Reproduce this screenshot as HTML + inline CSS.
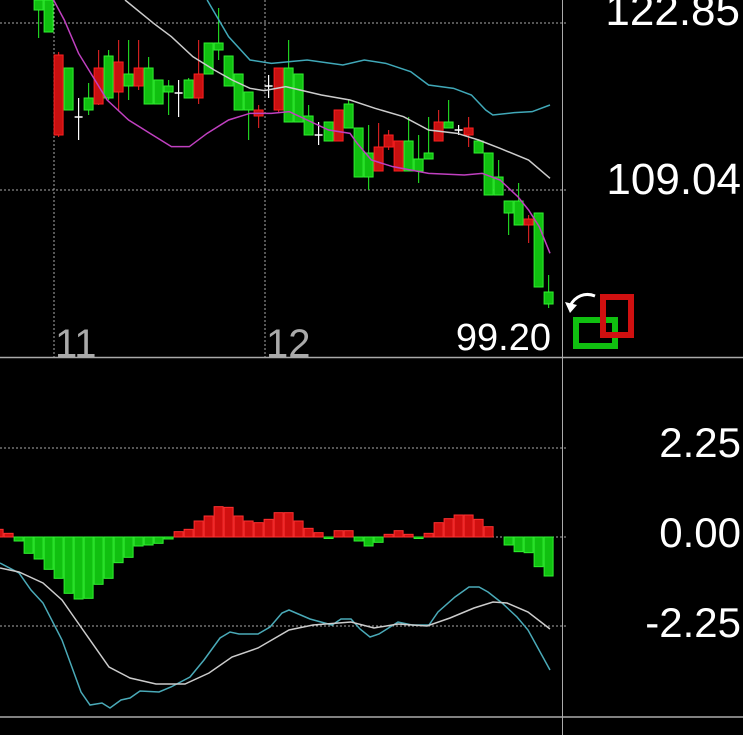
<!DOCTYPE html>
<html><head><meta charset="utf-8"><style>
html,body{margin:0;padding:0;background:#000;width:743px;height:735px;overflow:hidden}
svg{display:block}
text{font-family:"Liberation Sans",sans-serif;fill:#fff}
</style></head><body>
<svg id="s" width="743" height="735" viewBox="0 0 743 735" xmlns="http://www.w3.org/2000/svg">
<g stroke="#aaa" stroke-width="1" stroke-dasharray="2,2">
<line x1="0" y1="23" x2="567" y2="23"/>
<line x1="0" y1="190" x2="567" y2="190"/>
<line x1="0" y1="448" x2="567" y2="448"/>
<line x1="0" y1="537" x2="567" y2="537"/>
<line x1="0" y1="626" x2="567" y2="626"/>
<line x1="54" y1="0" x2="54" y2="357"/>
<line x1="265" y1="0" x2="265" y2="357"/>
</g>
<line x1="0" y1="357.5" x2="743" y2="357.5" stroke="#aaa" stroke-width="1.5"/>
<line x1="0" y1="717" x2="743" y2="717" stroke="#aaa" stroke-width="1.5"/>
<line x1="562.5" y1="0" x2="562.5" y2="735" stroke="#aaa" stroke-width="1"/>
<g id="hist"></g>
<g id="candles"></g>
<g fill="none" stroke-width="1.5">
<polyline id="pur" stroke="#c040c0"/>
<polyline id="wht" stroke="#ccc"/>
<polyline id="cyn" stroke="#40a8b8"/>
<polyline id="mcy" stroke="#4aaab8"/>
<polyline id="mwh" stroke="#ccc"/>
</g>
<text x="740" y="25" font-size="44" text-anchor="end">122.85</text>
<text x="741" y="194" font-size="44" text-anchor="end">109.04</text>
<text x="741" y="457" font-size="42" text-anchor="end">2.25</text>
<text x="741" y="547" font-size="42" text-anchor="end">0.00</text>
<text x="741" y="637" font-size="42" text-anchor="end">-2.25</text>
<text x="551" y="350" font-size="38" text-anchor="end">99.20</text>
<text x="55" y="357" font-size="40" style="fill:#aaa">11</text>
<text x="266" y="357" font-size="40" style="fill:#aaa">12</text>
<rect x="576" y="320" width="39" height="26" fill="none" stroke="#10c010" stroke-width="6"/>
<rect x="603" y="297" width="28" height="38" fill="none" stroke="#d01010" stroke-width="6"/>
<path d="M595,296 C585,292 575,296 570,306" fill="none" stroke="#fff" stroke-width="3"/>
<path d="M565,302 L570,313 L577,305 Z" fill="#fff"/>
</svg>
<script>
var NS="http://www.w3.org/2000/svg";
function X(k){return -6.4+10*k;}
function el(p,t,a){var e=document.createElementNS(NS,t);for(var k in a)e.setAttribute(k,a[k]);p.appendChild(e);return e;}
var H=[[0,118],[1,130],[2,153],[3,190],[4,207],[5,238],[6,265],[7,310],[8,327],[9,325],[10,283],[11,265],[12,218],[13,202],[14,168],[15,165],[16,160],[17,147],
[18,125],[19,118],[20,93],[21,78],[22,50],[23,52],[24,78],[25,93],[26,98],[27,88],[28,68],[29,68],[30,93],[31,115],[32,128],[33,143],[34,122],[35,122],[36,153],[37,168],[38,157],[39,133],[40,122],[41,133],[42,143],[43,130],[44,98],[45,86],[46,75],[47,75],[48,88],[49,110],[51,165],[52,185],[53,188],[54,230],[55,258]];
var hg=document.getElementById('hist'),z=537;
H.forEach(function(h){var y=490+h[1]/3,x=X(h[0]);var up=y<z;var c=up?'#d01010':'#10c010';
var t=Math.min(y,z),hh=Math.max(Math.abs(y-z),1.5);
el(hg,'rect',{x:x+0.5,y:t,width:9,height:hh,fill:c,stroke:up?'#ff3030':'#30f030','stroke-width':1});});
var C=[[4,'g',0,10,0,38],[5,'g',0,32,0,32],[6,'r',55,135,52,137],[7,'g',68,110,68,110],[8,'w',117,117,98,140],[9,'g',98,110,83,115],[10,'r',68,104,50,105],[11,'g',56,98,50,100],[12,'r',62,92,40,110],[13,'g',74,86,40,100],[14,'r',68,86,40,90],[15,'g',68,104,57,104],[16,'g',80,104,80,104],[17,'g',86,92,80,115],[18,'w',93,93,80,117],[19,'g',80,98,78,98],[20,'r',74,98,40,104],[21,'g',43,74,43,74],[22,'g',43,50,8,60],[23,'g',56,86,56,86],[24,'g',74,110,74,110],[25,'g',92,110,92,140],[26,'r',110,116,105,128],[27,'w',86,86,75,98],[28,'r',68,110,68,112],[29,'g',68,122,40,122],[30,'g',74,122,74,122],[31,'g',116,135,105,135],[32,'w',135,135,122,145],[33,'g',122,141,122,141],[34,'r',110,141,110,141],[35,'g',104,128,100,128],[36,'g',128,177,128,177],[37,'g',153,177,125,190],[38,'r',147,171,123,171],[39,'r',135,147,130,150],[40,'r',141,171,141,171],[41,'g',141,171,117,171],[42,'g',159,171,135,183],[43,'g',153,159,117,159],[44,'r',122,141,110,141],[45,'g',122,128,100,128],[46,'w',130,130,125,135],[47,'r',128,135,117,147],[48,'g',141,153,141,153],[49,'g',153,195,153,195],[50,'g',177,195,160,195],[51,'g',201,213,201,235],[52,'g',201,225,183,225],[53,'r',219,225,215,243],[54,'g',213,287,213,287],[55,'g',292,304,275,308]];
var cg=document.getElementById('candles');
C.forEach(function(c){var x=X(c[0]),cx=x+5;var col=c[1]=='g'?'#10c010':c[1]=='r'?'#c81010':'#fff';
el(cg,'line',{x1:cx,y1:c[4],x2:cx,y2:c[5],stroke:c[1]=='g'?'#20d020':c[1]=='r'?'#d02020':'#fff','stroke-width':1.2});
if(c[1]=='w'){el(cg,'line',{x1:x+1,y1:c[2],x2:x+9,y2:c[2],stroke:'#fff','stroke-width':1.5});}
else el(cg,'rect',{x:x+0.5,y:c[2],width:9,height:Math.max(c[3]-c[2],2),fill:col,stroke:c[1]=='g'?'#30f030':'#ff2020','stroke-width':1});});
function pl(id,pts,fx,fy,oy){document.getElementById(id).setAttribute('points',pts.map(function(p){return (p[0]/fx)+','+(oy+p[1]/fy);}).join(' '));}
pl('pur',[[150,0],[180,60],[220,160],[260,230],[300,300],[360,360],[420,400],[480,440],[530,440],[580,400],[640,360],[700,340],[760,340],[810,335],[860,360],[920,390],[980,400],[1000,430],[1040,480],[1100,500],[1150,510],[1200,520],[1300,525],[1350,520],[1400,540],[1450,590],[1480,630],[1510,680],[1540,760]],2.8,3,0);
pl('wht',[[350,0],[430,70],[480,110],[540,170],[600,210],[650,240],[700,265],[740,272],[800,260],[840,270],[900,285],[980,300],[1050,325],[1130,350],[1200,390],[1280,400],[1340,420],[1400,445],[1480,480],[1540,535]],2.8,3,0);
pl('cyn',[[580,0],[640,110],[700,180],[760,190],[860,180],[960,195],[1020,180],[1080,190],[1150,215],[1200,255],[1270,265],[1320,285],[1360,330],[1380,345],[1440,338],[1490,335],[1540,315]],2.8,3,0);
pl('mcy',[[0,563],[19,573],[31,590],[43,603],[62,640],[81,692],[90,705],[102,703],[110,708],[121,700],[130,698],[140,691],[159,692],[171,687],[190,677],[204,660],[220,638],[230,632],[239,634],[258,634],[270,627],[282,613],[289,610],[310,619],[332,625],[341,619],[351,619],[360,629],[370,637],[379,634],[398,622],[412,625],[429,625],[438,612],[455,597],[469,587],[479,587],[488,592],[502,603],[517,617],[528,630],[550,670]],1,1,0);
pl('mwh',[[0,568],[19,572],[43,583],[62,600],[83,630],[109,667],[130,678],[156,684],[185,684],[209,673],[232,657],[258,648],[289,630],[313,625],[351,622],[374,628],[398,624],[427,626],[450,618],[474,608],[493,602],[507,603],[528,612],[550,629]],1,1,0);
</script>
</body></html>
